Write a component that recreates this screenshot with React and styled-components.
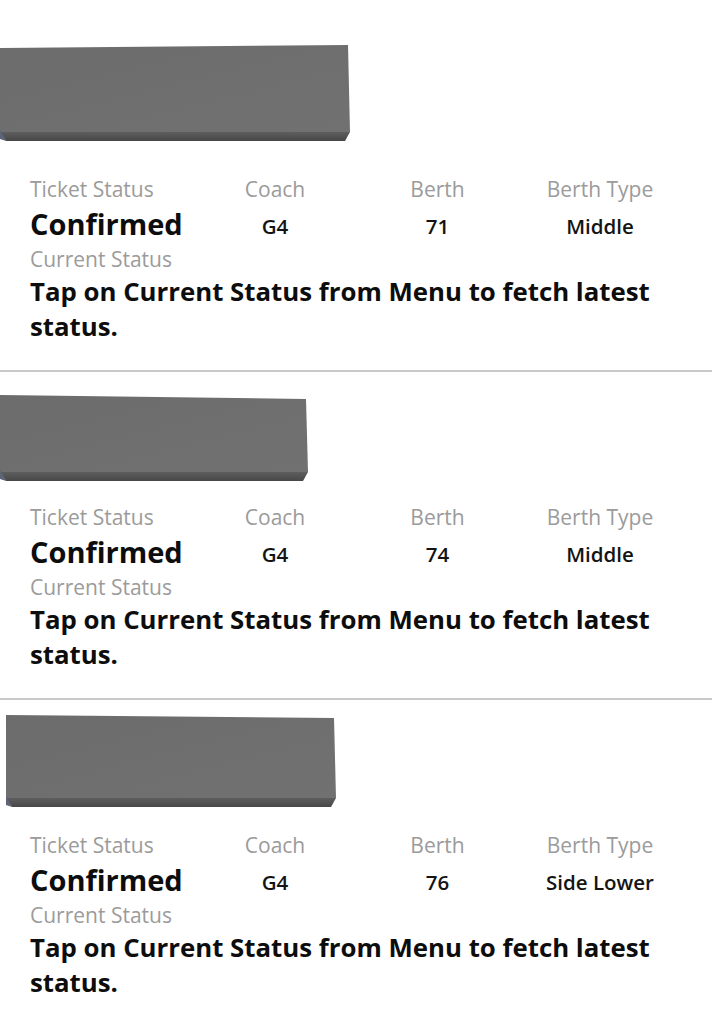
import React from 'react';
import styled, { createGlobalStyle } from 'styled-components';

const GlobalStyle = createGlobalStyle`
  body {
    margin: 0;
    background: #ffffff;
    font-family: 'Open Sans', 'Noto Sans', sans-serif;
  }
`;

const Page = styled.div`
  width: 712px;
  padding-top: 44px;
`;

const Card = styled.div`
  padding-bottom: 26px;
  border-bottom: ${(props) => (props.last ? 'none' : '2px solid #c9c9c9')};
`;

const PhotoArea = styled.div`
  height: 130px;
  padding-left: ${(props) => props.left}px;
  padding-top: ${(props) => props.top}px;
  box-sizing: border-box;
`;

const Grid = styled.div`
  display: grid;
  grid-template-columns: 170px 150px 175px 150px;
  padding-left: 30px;
`;

const Label = styled.div`
  font-size: 21px;
  line-height: 30px;
  color: #9b9b9b;
  text-align: ${(props) => (props.first ? 'left' : 'center')};
`;

const Value = styled.div`
  font-size: 20.5px;
  line-height: 36px;
  padding-top: 4px;
  font-weight: 600;
  color: #141414;
  text-align: center;
`;

const StatusValue = styled.div`
  font-size: 29px;
  line-height: 40px;
  font-weight: 700;
  color: #0d0d0d;
`;

const Section = styled.div`
  padding: 0 30px;
`;

const Message = styled.div`
  font-size: 25.8px;
  line-height: 35px;
  font-weight: 700;
  color: #0d0d0d;
`;

// redacted photo block
const Redacted = ({ w, h, tilt }) => (
  <svg width={w} height={h} viewBox={`0 0 ${w} ${h}`}>
    <defs>
      <linearGradient id={`face${w}`} x1="0" y1="0" x2="1" y2="1">
        <stop offset="0" stopColor="#6c6c6c" />
        <stop offset="1" stopColor="#717171" />
      </linearGradient>
      <linearGradient id={`band${w}`} x1="0" y1="0" x2="0" y2="1">
        <stop offset="0" stopColor="#5e5e5e" />
        <stop offset="1" stopColor="#474747" />
      </linearGradient>
    </defs>
    <polygon
      points={`0,${tilt > 0 ? tilt : 0} ${w - 2},${tilt > 0 ? 0 : -tilt} ${w},${h - 10} 0,${h - 10}`}
      fill={`url(#face${w})`}
    />
    <polygon points={`0,${h - 10} ${w},${h - 10} ${w - 5},${h - 1} 6,${h - 1}`} fill={`url(#band${w})`} />
    <polygon points={`0,${h - 12} 6,${h - 1} 0,${h - 3}`} fill="#5d6478" />
  </svg>
);

const tickets = [
  { berth: '71', type: 'Middle', photo: { left: 0, top: 1, w: 350, h: 97, tilt: 3 } },
  { berth: '74', type: 'Middle', photo: { left: 0, top: 23, w: 308, h: 87, tilt: -4 } },
  { berth: '76', type: 'Side Lower', photo: { left: 6, top: 15, w: 330, h: 93, tilt: -3 } },
];

export default function App() {
  return (
    <Page>
      <GlobalStyle />
      {tickets.map((t, i) => (
        <Card key={i} last={i === tickets.length - 1}>
          <PhotoArea left={t.photo.left} top={t.photo.top}>
            <Redacted w={t.photo.w} h={t.photo.h} tilt={t.photo.tilt} />
          </PhotoArea>
          <Grid>
            <Label first>Ticket Status</Label>
            <Label>Coach</Label>
            <Label>Berth</Label>
            <Label>Berth Type</Label>
            <StatusValue>Confirmed</StatusValue>
            <Value>G4</Value>
            <Value>{t.berth}</Value>
            <Value>{t.type}</Value>
          </Grid>
          <Section>
            <Label first>Current Status</Label>
            <Message>Tap on Current Status from Menu to fetch latest status.</Message>
          </Section>
        </Card>
      ))}
    </Page>
  );
}
